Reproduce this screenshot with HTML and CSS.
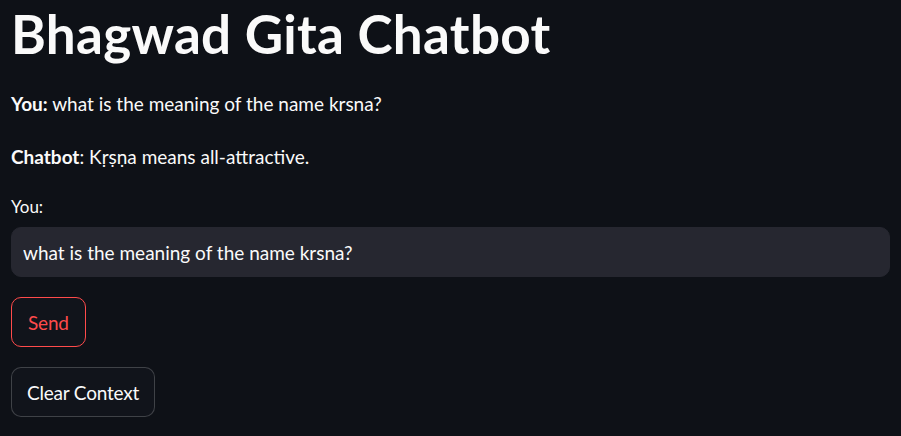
FILE: index.html
```html
<!DOCTYPE html>
<html lang="en">
<head>
<meta charset="utf-8">
<title>Bhagwad Gita Chatbot</title>
<link rel="stylesheet" href="styles.css">
</head>
<body>
<main class="app">
  <h1 class="title">Bhagwad Gita Chatbot</h1>
  <p class="msg"><strong>You:</strong> what is the meaning of the name krsna?</p>
  <p class="msg msg-bot"><strong>Chatbot</strong>: Kṛṣṇa means all-attractive.</p>
  <label class="field-label" for="q">You:</label>
  <input class="field" id="q" type="text" value="what is the meaning of the name krsna?">
  <div class="actions">
    <button class="btn btn-primary" type="button">Send</button>
    <button class="btn" type="button">Clear Context</button>
  </div>
</main>
</body>
</html>
```
FILE: styles.css
```css
html, body {
  margin: 0;
  background: #0e1117;
}
body {
  color: #fafafa;
  font-family: Lato, "Open Sans", sans-serif;
  overflow: hidden;
}
.app {
  display: flex;
  flex-direction: column;
  align-items: flex-start;
  padding: 2px 11px 0;
}
.title {
  margin: 0;
  font-size: 53px;
  line-height: 64px;
  font-weight: 700;
  letter-spacing: 0.3px;
}
.msg {
  margin: 23px 0 0;
  font-size: 19px;
  line-height: 30px;
}
.msg strong {
  font-weight: 700;
}
.msg-bot {
  margin-top: 23px;
}
.field-label {
  margin-top: 24px;
  font-size: 17px;
  line-height: 22px;
}
.field {
  box-sizing: border-box;
  width: 100%;
  height: 50px;
  margin: 9px 0 0;
  padding: 0 11px;
  border: 1px solid #262730;
  border-radius: 10px;
  background: #262730;
  color: #fafafa;
  font-family: inherit;
  font-size: 19px;
  outline: none;
}
.actions {
  display: flex;
  flex-direction: column;
  align-items: flex-start;
  gap: 20px;
  margin-top: 20px;
}
.btn {
  box-sizing: border-box;
  height: 50px;
  padding: 0 15px;
  border: 1px solid rgba(250, 250, 250, 0.2);
  border-radius: 10px;
  background: #11141b;
  color: #fafafa;
  font-family: inherit;
  font-size: 19px;
  letter-spacing: -0.2px;
}
.btn-primary {
  border-color: #ff4b4b;
  color: #ff4b4b;
  padding: 0 16px;
}
```
